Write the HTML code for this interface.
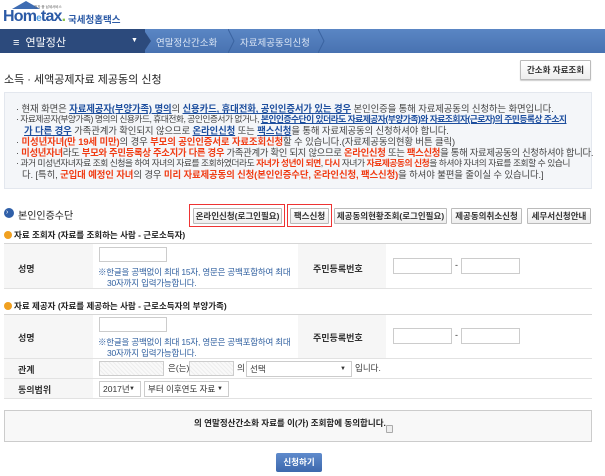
<!DOCTYPE html>
<html><head><meta charset="utf-8"><style>
*{margin:0;padding:0;box-sizing:border-box}
body{width:605px;height:476px;background:#fff;font-family:"Liberation Sans","Noto Sans CJK KR",sans-serif;color:#333;position:relative;overflow:hidden;font-size:9px}
.a{position:absolute;white-space:nowrap}
.nav{position:absolute;left:0;top:29px;width:605px;height:24px;background:linear-gradient(#5a86c4,#4872b1)}
.navd{position:absolute;left:0;top:29px;width:145px;height:24px;background:#2c4a7c}
.btn{position:absolute;height:16px;border:1px solid #bbb;background:linear-gradient(#fff,#eee);font-size:8.5px;font-weight:bold;color:#333;text-align:center;line-height:14px;white-space:nowrap;border-radius:1px}
.red{position:absolute;border:1.5px solid #e33}
.box{position:absolute;left:4px;top:92px;width:588px;height:97px;background:#f4f6f9;border:1px solid #e3e7ee}
.ln{position:absolute;left:16px;font-size:9.4px;letter-spacing:-0.1px;white-space:nowrap;color:#444}
.b{color:#1d4e9e;text-decoration:underline;font-weight:bold}
.r{color:#f03c14;font-weight:bold}
.hl{position:absolute;height:1px;background:#e2e2e2;left:4px;width:588px}
.cell{position:absolute;background:#f6f6f6}
.in{position:absolute;border:1px solid #ccc;background:#fff}
.hat{position:absolute;border:1px solid #ccc;background:repeating-linear-gradient(45deg,#eee 0 1px,#f9f9f9 1px 3px)}
.lab{position:absolute;font-size:9px;font-weight:bold;color:#333;white-space:nowrap}
.note{position:absolute;font-size:8.5px;color:#2f5f9f;white-space:nowrap;letter-spacing:-0.2px}
.sel{position:absolute;border:1px solid #ccc;background:#fff;font-size:8.5px;line-height:14px;padding-left:3px;white-space:nowrap}
.sel:after{content:"▼";position:absolute;right:5px;top:0;font-size:6px}
.dot{display:inline-block;width:8px;height:8px;border-radius:50%;background:#f0a020;vertical-align:-1px;margin-right:2px}
</style></head><body>
<div class="a" style="left:12px;top:1px;width:0;height:0;border-left:14px solid transparent;border-right:14px solid transparent;border-bottom:8px solid #3f6db3"></div>
<div class="a" style="left:3px;top:8px;font-size:16px;font-weight:bold;color:#2b5aa6;letter-spacing:-0.8px">Hom<span style="font-size:10px;color:#4a9ae0">e</span>tax<span style="color:#8bc34a">.</span></div>
<div class="a" style="left:34px;top:5px;font-size:3.5px;color:#555">전자 중 납세서비스</div>
<div class="a" style="left:68px;top:12px;font-size:9.5px;color:#2b5aa6;font-weight:bold">국세청홈택스</div>
<div class="nav"></div><div class="navd"></div>
<svg class="a" style="left:143px;top:29px" width="10" height="24"><path d="M0 0L8 12L0 24" fill="#2c4a7c"/></svg>
<svg class="a" style="left:228px;top:29px" width="8" height="24"><path d="M0 0L6 12L0 24" fill="none" stroke="#3a63a0"/></svg>
<svg class="a" style="left:318px;top:29px" width="8" height="24"><path d="M0 0L6 12L0 24" fill="none" stroke="#3a63a0"/></svg>
<div class="a" style="left:13px;top:34px;color:#fff;font-size:11px">≡ &nbsp;연말정산</div>
<div class="a" style="left:131px;top:37px;color:#fff;font-size:7px">▼</div>
<div class="a" style="left:156px;top:35px;color:#dbe6f5;font-size:9.5px">연말정산간소화</div>
<div class="a" style="left:240px;top:35px;color:#dbe6f5;font-size:9.5px">자료제공동의신청</div>
<div class="a" style="left:4px;top:71px;font-size:11px;color:#222">소득 · 세액공제자료 제공동의 신청</div>
<div class="btn" style="left:520px;top:60px;width:71px;height:20px;line-height:18px;box-shadow:0 1px 1px #ccc">간소화 자료조회</div>
<div class="box"></div>
<div class="ln" style="top:101px">· 현재 화면은 <span class="b">자료제공자(부양가족) 명의</span>의 <span class="b">신용카드, 휴대전화, 공인인증서가 있는 경우</span> 본인인증을 통해 자료제공동의 신청하는 화면입니다.</div>
<div class="ln" style="top:112px;font-size:8.8px;letter-spacing:-0.55px">· 자료제공자(부양가족) 명의의 신용카드, 휴대전화, 공인인증서가 없거나, <span class="b">본인인증수단이 있더라도 자료제공자(부양가족)와 자료조회자(근로자)의 주민등록상 주소지</span></div>
<div class="ln" style="top:123px;left:24px"><span class="b">가 다른 경우</span> 가족관계가 확인되지 않으므로 <span class="b">온라인신청</span> 또는 <span class="b">팩스신청</span>을 통해 자료제공동의 신청하셔야 합니다.</div>
<div class="ln" style="top:134px">· <span class="r">미성년자녀(만 19세 미만)</span>의 경우 <span class="r">부모의 공인인증서로 자료조회신청</span>할 수 있습니다.(자료제공동의현황 버튼 클릭)</div>
<div class="ln" style="top:145px;letter-spacing:-0.3px">· <span class="r">미성년자녀</span>라도 <span class="r">부모와 주민등록상 주소지가 다른 경우</span> 가족관계가 확인 되지 않으므로 <span class="r">온라인신청</span> 또는 <span class="r">팩스신청</span>을 통해 자료제공동의 신청하셔야 합니다.</div>
<div class="ln" style="top:156px;font-size:8.8px;letter-spacing:-0.5px">· 과거 미성년자녀자료 조회 신청을 하여 자녀의 자료를 조회하였더라도 <span class="r">자녀가 성년이 되면</span>, <span class="r">다시</span> 자녀가 <span class="r">자료제공동의 신청</span>을 하셔야 자녀의 자료를 조회할 수 있습니</div>
<div class="ln" style="top:167px;left:22px">다. [특히, <span class="r">군입대 예정인 자녀</span>의 경우 <span class="r">미리 자료제공동의 신청(본인인증수단, 온라인신청, 팩스신청)</span>을 하셔야 불편을 줄이실 수 있습니다.]</div>
<div class="a" style="left:4px;top:208px;width:10px;height:10px;border-radius:50%;background:#2f5fa8"></div>
<div class="a" style="left:6px;top:210px;color:#fff;font-size:7px;line-height:6px">›</div>
<div class="a" style="left:18px;top:207px;font-size:10px;color:#222">본인인증수단</div>
<div class="btn" style="left:193px;top:208px;width:89px">온라인신청(로그인필요)</div>
<div class="btn" style="left:290px;top:208px;width:39px">팩스신청</div>
<div class="btn" style="left:334px;top:208px;width:113px">제공동의현황조회(로그인필요)</div>
<div class="btn" style="left:451px;top:208px;width:71px">제공동의취소신청</div>
<div class="btn" style="left:527px;top:208px;width:64px">세무서신청안내</div>
<div class="red" style="left:189px;top:204px;width:96px;height:23px"></div>
<div class="red" style="left:287px;top:204px;width:45px;height:23px"></div>
<div class="a" style="left:4px;top:229px;font-size:8.5px;font-weight:bold;color:#222"><span class="dot"></span>자료 조회자 (자료를 조회하는 사람 - 근로소득자)</div>
<div class="hl" style="top:243px;background:#d6d6d6"></div>
<div class="cell" style="left:4px;top:244px;width:89px;height:44px"></div>
<div class="cell" style="left:298px;top:244px;width:88px;height:44px"></div>
<div class="hl" style="top:288px"></div>
<div class="lab" style="left:18px;top:262px">성명</div>
<div class="in" style="left:99px;top:247px;width:68px;height:15px"></div>
<div class="note" style="left:98px;top:266px">※한글을 공백없이 최대 15자, 영문은 공백포함하여 최대</div>
<div class="note" style="left:107px;top:277px">30자까지 입력가능합니다.</div>
<div class="lab" style="left:313px;top:262px">주민등록번호</div>
<div class="in" style="left:393px;top:258px;width:59px;height:16px"></div>
<div class="a" style="left:455px;top:260px;font-size:9px">-</div>
<div class="in" style="left:461px;top:258px;width:59px;height:16px"></div>
<div class="a" style="left:4px;top:300px;font-size:8.5px;font-weight:bold;color:#222"><span class="dot"></span>자료 제공자 (자료를 제공하는 사람 - 근로소득자의 부양가족)</div>
<div class="hl" style="top:314px;background:#d6d6d6"></div>
<div class="cell" style="left:4px;top:315px;width:89px;height:83px"></div>
<div class="cell" style="left:298px;top:315px;width:88px;height:43px"></div>
<div class="hl" style="top:358px"></div><div class="hl" style="top:378px"></div><div class="hl" style="top:398px"></div>
<div class="lab" style="left:18px;top:331px">성명</div>
<div class="in" style="left:99px;top:317px;width:68px;height:15px"></div>
<div class="note" style="left:98px;top:336px">※한글을 공백없이 최대 15자, 영문은 공백포함하여 최대</div>
<div class="note" style="left:107px;top:347px">30자까지 입력가능합니다.</div>
<div class="lab" style="left:313px;top:331px">주민등록번호</div>
<div class="in" style="left:393px;top:328px;width:59px;height:16px"></div>
<div class="a" style="left:455px;top:330px;font-size:9px">-</div>
<div class="in" style="left:461px;top:328px;width:59px;height:16px"></div>
<div class="lab" style="left:18px;top:363px">관계</div>
<div class="hat" style="left:99px;top:361px;width:65px;height:15px"></div>
<div class="a" style="left:168px;top:362px;font-size:8.5px">은(는)</div>
<div class="hat" style="left:189px;top:361px;width:45px;height:15px"></div>
<div class="a" style="left:237px;top:362px;font-size:8.5px">의</div>
<div class="sel" style="left:246px;top:361px;width:106px;height:16px">선택</div>
<div class="a" style="left:355px;top:362px;font-size:8.5px">입니다.</div>
<div class="lab" style="left:18px;top:383px">동의범위</div>
<div class="sel" style="left:99px;top:381px;width:42px;height:16px">2017년</div>
<div class="sel" style="left:144px;top:381px;width:85px;height:16px">부터 이후연도 자료</div>
<div class="a" style="left:4px;top:410px;width:588px;height:32px;background:#f8f8f8;border:1px solid #ccc"></div>
<div class="a" style="left:194px;top:417px;font-size:8.5px;font-weight:bold;color:#222">의 연말정산간소화 자료를 이(가) 조회함에 동의합니다.</div>
<div class="a" style="left:386px;top:425px;width:7px;height:8px;border:1px solid #aaa;background:#eee;border-radius:1px"></div>
<div class="a" style="left:276px;top:453px;width:46px;height:19px;background:linear-gradient(#5f8bcc,#3d68ad);border-radius:2px;color:#fff;font-size:8.5px;font-weight:bold;text-align:center;line-height:19px">신청하기</div>
</body></html>
